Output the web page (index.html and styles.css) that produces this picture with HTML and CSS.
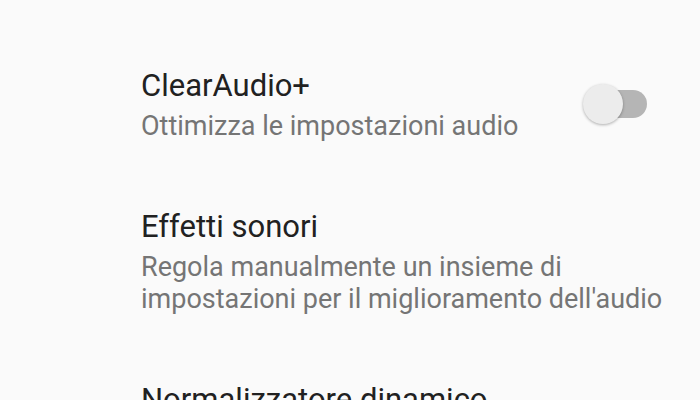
FILE: index.html
```html
<!DOCTYPE html>
<html lang="it">
<head>
<meta charset="utf-8">
<link rel="stylesheet" href="styles.css">
</head>
<body>
<div class="list">
  <div class="item first">
    <div class="text">
      <div class="title">ClearAudio+</div>
      <div class="summary">Ottimizza le impostazioni audio</div>
    </div>
    <div class="switch"><div class="track"></div><div class="thumb"></div></div>
  </div>
  <div class="item">
    <div class="text">
      <div class="title">Effetti sonori</div>
      <div class="summary">Regola manualmente un insieme di<br>impostazioni per il miglioramento dell'audio</div>
    </div>
  </div>
  <div class="item">
    <div class="text">
      <div class="title">Normalizzatore dinamico</div>
    </div>
  </div>
</div>
</body>
</html>
```
FILE: styles.css
```css
html, body {
  margin: 0;
  padding: 0;
  background: #fafafa;
  width: 700px;
  height: 400px;
  overflow: hidden;
}
body {
  font-family: Roboto, "Noto Sans", sans-serif;
}
.list {
  display: flex;
  flex-direction: column;
  padding-left: 141px;
  padding-right: 16px;
}
.item {
  display: flex;
  align-items: center;
  padding-top: 65px;
}
.item.first {
  padding-top: 66px;
}
.text {
  flex: 1;
}
.title {
  font-size: 31px;
  line-height: 40px;
  color: #212121;
  white-space: nowrap;
}
.summary {
  font-size: 27px;
  line-height: 32px;
  color: #757575;
  margin-top: 4px;
  white-space: nowrap;
}
.switch {
  position: relative;
  flex: none;
  width: 64px;
  height: 42px;
  margin-right: 37px;
}
.track {
  position: absolute;
  right: 0;
  top: 7px;
  width: 57px;
  height: 28px;
  border-radius: 14px;
  background: #b5b5b5;
}
.thumb {
  position: absolute;
  left: 0;
  top: 1px;
  width: 40px;
  height: 40px;
  border-radius: 50%;
  background: #ececec;
  box-shadow: 0 1px 3px rgba(0,0,0,0.3);
}
```
